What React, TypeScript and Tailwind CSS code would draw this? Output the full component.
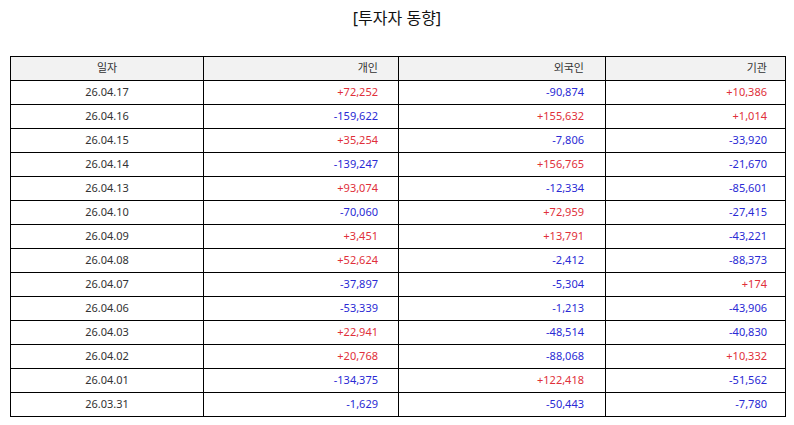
const rows: [string, string, string, string][] = [
  ['26.04.17', '+72,252', '-90,874', '+10,386'],
  ['26.04.16', '-159,622', '+155,632', '+1,014'],
  ['26.04.15', '+35,254', '-7,806', '-33,920'],
  ['26.04.14', '-139,247', '+156,765', '-21,670'],
  ['26.04.13', '+93,074', '-12,334', '-85,601'],
  ['26.04.10', '-70,060', '+72,959', '-27,415'],
  ['26.04.09', '+3,451', '+13,791', '-43,221'],
  ['26.04.08', '+52,624', '-2,412', '-88,373'],
  ['26.04.07', '-37,897', '-5,304', '+174'],
  ['26.04.06', '-53,339', '-1,213', '-43,906'],
  ['26.04.03', '+22,941', '-48,514', '-40,830'],
  ['26.04.02', '+20,768', '-88,068', '+10,332'],
  ['26.04.01', '-134,375', '+122,418', '-51,562'],
  ['26.03.31', '-1,629', '-50,443', '-7,780'],
]

// right padding per column (≈10% of cell width)
const pads = ['pr-[20px]', 'pr-[21px]', 'pr-[18px]']

function tone(v: string) {
  return v.startsWith('+') ? 'text-[#e0303a]' : 'text-[#2a2ad4]'
}

export default function App() {
  return (
    <div
      className="w-[794px] h-[425px] bg-white text-[#333]"
      style={{ fontFamily: '"Noto Sans", "Noto Sans CJK KR", sans-serif' }}
    >
      <h1 className="pt-[5px] h-[56px] text-center text-[16px] leading-[26px] text-[#111]">
        [투자자 동향]
      </h1>

      <table className="ml-[10px] w-[775px] table-fixed border-collapse text-[11px]">
        <colgroup>
          <col className="w-[193px]" />
          <col className="w-[195px]" />
          <col className="w-[207px]" />
          <col className="w-[180px]" />
        </colgroup>
        <thead>
          <tr className="h-[24px] bg-[#f2f2f2]">
            <th className="border-[1.5px] border-black font-normal text-center">일자</th>
            <th className={`border-[1.5px] border-black font-normal text-right ${pads[0]}`}>개인</th>
            <th className={`border-[1.5px] border-black font-normal text-right ${pads[1]}`}>외국인</th>
            <th className={`border-[1.5px] border-black font-normal text-right ${pads[2]}`}>기관</th>
          </tr>
        </thead>
        <tbody>
          {rows.map(([date, ind, fgn, inst]) => (
            <tr key={date} className="h-[24px]">
              <td className="border-[1.5px] border-black text-center">{date}</td>
              <td className={`border-[1.5px] border-black text-right ${pads[0]} ${tone(ind)}`}>{ind}</td>
              <td className={`border-[1.5px] border-black text-right ${pads[1]} ${tone(fgn)}`}>{fgn}</td>
              <td className={`border-[1.5px] border-black text-right ${pads[2]} ${tone(inst)}`}>{inst}</td>
            </tr>
          ))}
        </tbody>
      </table>
    </div>
  )
}
